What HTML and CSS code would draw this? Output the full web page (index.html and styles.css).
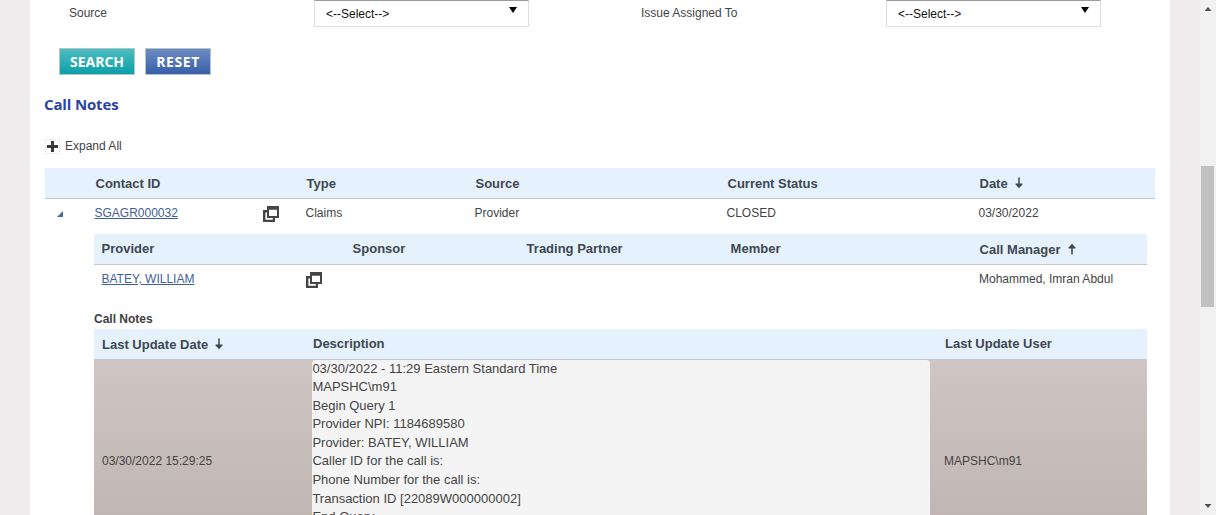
FILE: index.html
```
<!DOCTYPE html>
<html lang="en">
<head>
<meta charset="utf-8">
<title>Call Notes</title>
<link rel="stylesheet" href="styles.css">
</head>
<body>
<svg class="defs" width="0" height="0">
  <symbol id="windows" viewBox="0 0 16 16">
    <path fill="#454545" fill-rule="evenodd" d="M4 0H16V12H4ZM6 3.8V10H14V3.8Z"/>
    <path fill="#454545" d="M0 4H4.5V6.4H2.4V13.8H9.8V11.5H12V16H0Z"/>
  </symbol>
  <symbol id="arrow" viewBox="0 0 8 12">
    <path fill="none" stroke="#3f4750" stroke-width="1.5" d="M4 .5V9"/>
    <path fill="#3f4750" d="M.6 6.4H7.4V7.6L4 11.2L.6 7.6Z"/>
  </symbol>
</svg>
<div class="viewport">
  <main class="page">
    <div class="filters">
      <label class="label-source">Source</label>
      <div class="select"><span>&lt;--Select--&gt;</span><i class="caret"></i></div>
      <label class="label-assigned">Issue Assigned To</label>
      <div class="select"><span>&lt;--Select--&gt;</span><i class="caret"></i></div>
    </div>
    <div class="buttons">
      <button class="btn search">SEARCH</button>
      <button class="btn reset">RESET</button>
    </div>
    <h2>Call Notes</h2>
    <div class="expand"><span class="plus"></span><span>Expand All</span></div>

    <section class="contacts">
      <div class="row head contact-head cols-contact">
        <span></span><span>Contact ID</span><span></span><span>Type</span><span>Source</span><span>Current Status</span>
        <span>Date<svg class="arrow down"><use href="#arrow"/></svg></span>
      </div>
      <div class="row data contact cols-contact">
        <span><i class="open-mark"></i></span><span><a>SGAGR000032</a></span><span><svg class="win"><use href="#windows"/></svg></span><span>Claims</span><span>Provider</span><span>CLOSED</span><span>03/30/2022</span>
      </div>
      <div class="nested">
        <div class="row head cols-provider">
          <span>Provider</span><span></span><span>Sponsor</span><span>Trading Partner</span><span>Member</span>
          <span class="low">Call Manager<svg class="arrow up"><use href="#arrow"/></svg></span>
        </div>
        <div class="row data cols-provider">
          <span><a>BATEY, WILLIAM</a></span><span><svg class="win"><use href="#windows"/></svg></span><span></span><span></span><span></span><span>Mohammed, Imran Abdul</span>
        </div>
        <h3>Call Notes</h3>
        <div class="row head cols-notes">
          <span class="low">Last Update Date<svg class="arrow down"><use href="#arrow"/></svg></span><span>Description</span><span>Last Update User</span>
        </div>
        <div class="note cols-notes">
          <span>03/30/2022 15:29:25</span>
          <div class="description">03/30/2022 - 11:29 Eastern Standard Time
MAPSHC\m91
Begin Query 1
Provider NPI: 1184689580
Provider: BATEY, WILLIAM
Caller ID for the call is:
Phone Number for the call is:
Transaction ID [22089W000000002]
End Query</div>
          <span>MAPSHC\m91</span>
        </div>
      </div>
    </section>
  </main>
  <div class="scrollbar"><i class="tri up"></i><div class="thumb"></div><i class="tri down"></i></div>
</div>
</body>
</html>
```
FILE: styles.css
```
* { box-sizing: border-box; }
body { margin: 0; background: #eeecec; color: #444; font: 12px/16px "Liberation Sans", Arial, sans-serif; }
.defs { display: block; }
.viewport { display: flex; height: 515px; overflow: hidden; }
.page { width: 1140px; margin: 0 30px; padding: 0 15px; background: #fff; overflow: hidden; flex: none; }

.filters { display: grid; grid-template-columns: 246px 215px 357px 215px; height: 27px; padding-left: 23px; }
.filters label { padding-top: 5px; }
.filters .label-assigned { padding-left: 112px; }
.filters .label-source { padding-left: 1px; }
.select { display: flex; justify-content: space-between; height: 27px; padding: 5px 11px 0; background: #fff; color: #111; border: 1px solid #dedede; border-top-color: #999; }
.caret { width: 8px; height: 6px; margin-top: 1px; background: #000; clip-path: polygon(0 0, 100% 0, 50% 100%); }

.buttons { display: flex; gap: 10px; margin: 21px 0 0 14px; }
.btn { height: 27px; padding: 0; border: 1px solid #b4c4c8; color: #fff; font: bold 14px/25px "Open Sans", sans-serif; }
.search { width: 76px; background: linear-gradient(#4cbdc0, #0d9fa9); }
.reset { width: 66px; background: linear-gradient(#6d8bc2, #375fa8); letter-spacing: .6px; }

h2 { margin: 18px 0 0 -1px; color: #2b44a2; font: bold 15px/22px "Open Sans", sans-serif; letter-spacing: -.15px; }
.expand { display: flex; align-items: center; gap: 5px; height: 16px; margin: 23px 0 14px; }
.plus { width: 15px; height: 15px; border: 1px dotted #ddd; background: linear-gradient(#3c3c3c, #3c3c3c) center / 11px 3px no-repeat, linear-gradient(#3c3c3c, #3c3c3c) center / 3px 11px no-repeat; }

.row { display: grid; }
.head { height: 31px; background: #e5f2fd; border-bottom: 1px solid #c4c9cf; color: #3f4750; font-size: 13px; font-weight: bold; line-height: 30px; }
.cols-contact { grid-template-columns: 50px 168px 43px 169px 252px 252px 176px; }
.contact-head { padding-top: 1px; padding-left: .5px; }
.contacts { width: 1110px; }
.data { height: 35px; line-height: 28px; }
.contact > span:not(:first-child) { margin-left: -.5px; }
a { color: #3e5f9b; text-decoration: underline; }
.open-mark { display: block; width: 6px; height: 6px; margin: 12px 0 0 12px; background: #3f6cae; clip-path: polygon(100% 0, 100% 100%, 0 100%); }
.win { display: block; width: 16px; height: 16px; margin-top: 7px; }
.contact .win { margin-left: .5px; }
.arrow { width: 8px; height: 12px; margin-left: 7px; vertical-align: -1px; }
.arrow.up { transform: rotate(180deg); }
.low { padding-top: 1px; }

.nested { width: 1053px; margin-left: 49px; }
.cols-provider { grid-template-columns: 204px 47px 174px 204px 249px 168px; padding-left: 7.6px; }
.cols-provider.data { padding-left: 7.5px; grid-template-columns: 204.5px 47px 174px 204px 248px 168px; }
h3 { margin: 11px 0 2px; font-size: 12px; line-height: 16px; font-weight: bold; color: #3e4043; }
.cols-notes { display: grid; grid-template-columns: 211px 632px 200px; padding-left: 8px; }
.note { grid-template-columns: 210px 618px 217px; height: 202px; align-items: center; background: linear-gradient(#cfc6c3, #bcb1ad); }
.note > span:last-child { padding-left: 14px; }
.description { height: 202px; margin-left: .4px; border-radius: 4px; background: #f4f4f4; font-size: 13px; line-height: 18.571px; text-indent: 0; white-space: pre; }
.description::before { content: ""; display: block; margin-top: -.45px; }

.scrollbar { display: flex; flex-direction: column; align-items: center; width: 16px; height: 515px; background: #f1f1f1; flex: none; }
.thumb { width: 13px; height: 141px; background: #c1c1c1; margin: 155px 1px 0 0; }
.tri { width: 7px; height: 4px; background: #505050; }
.tri.up { margin-top: 7px; clip-path: polygon(50% 0, 100% 100%, 0 100%); }
.tri.down { margin: auto 0 7px; clip-path: polygon(0 0, 100% 0, 50% 100%); }
```
